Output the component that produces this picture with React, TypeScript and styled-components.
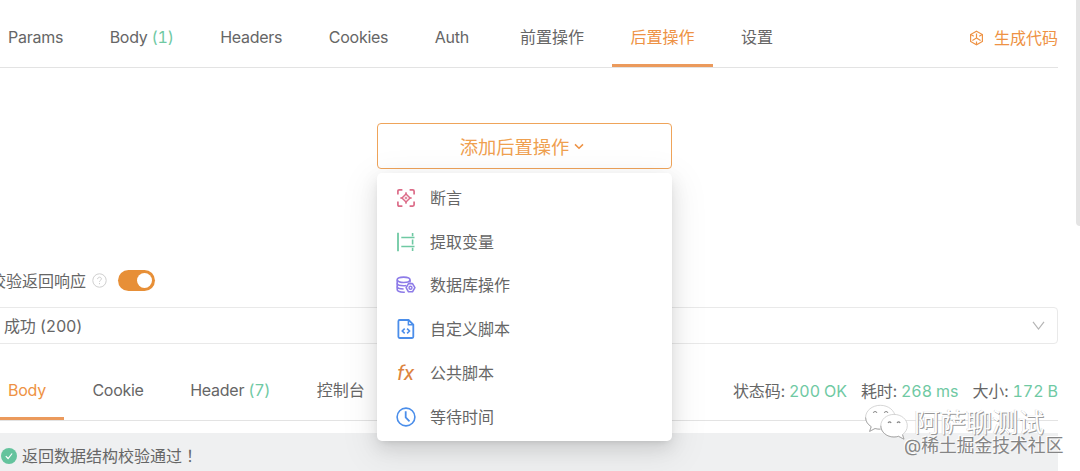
import React from "react";
import styled, { createGlobalStyle, css } from "styled-components";

const ORANGE = "#ee9244";
const GREEN = "#6fc9a3";

const requestTabs = [
  { label: "Params" },
  { label: "Body", count: 1 },
  { label: "Headers" },
  { label: "Cookies" },
  { label: "Auth" },
  { label: "前置操作", cjk: true, indent: 4.5 },
  { label: "后置操作", cjk: true, active: true },
  { label: "设置", cjk: true },
];

const responseTabs = [
  { label: "Body", active: true },
  { label: "Cookie" },
  { label: "Header", count: 7 },
  { label: "控制台", cjk: true },
];

const menuItems = [
  { label: "断言", icon: <AssertIcon /> },
  { label: "提取变量", icon: <ExtractIcon /> },
  { label: "数据库操作", icon: <DatabaseIcon /> },
  { label: "自定义脚本", icon: <ScriptIcon /> },
  { label: "公共脚本", icon: <FxIcon /> },
  { label: "等待时间", icon: <ClockIcon /> },
];

export default function App() {
  return (
    <>
      <GlobalStyle />
      <Page>
        <Content>
          <TabBar $height={68}>
            {requestTabs.map((tab) => (
              <Tab key={tab.label} $active={tab.active} $cjk={tab.cjk} $indent={tab.indent}>
                {tab.label}
                {tab.count && <Count>({tab.count})</Count>}
              </Tab>
            ))}
            <CodeLink>
              <CubeIcon />
              生成代码
            </CodeLink>
          </TabBar>

          <Processor>
            <Dropdown>
              <AddButton>
                添加后置操作
                <ButtonArrow />
              </AddButton>
              <Menu>
                {menuItems.map((item) => (
                  <MenuItem key={item.label}>
                    <IconSlot>{item.icon}</IconSlot>
                    {item.label}
                  </MenuItem>
                ))}
              </Menu>
            </Dropdown>
          </Processor>

          <ValidateRow>
            <ValidateLabel>校验返回响应</ValidateLabel>
            <HelpIcon />
            <Switch>
              <Knob />
            </Switch>
          </ValidateRow>

          <Select>
            成功 (200)
            <SelectArrow />
          </Select>

          <TabBar $height={77}>
            {responseTabs.map((tab) => (
              <Tab key={tab.label} $active={tab.active} $cjk={tab.cjk}>
                {tab.label}
                {tab.count && <Count>({tab.count})</Count>}
              </Tab>
            ))}
            <Stats>
              <span>
                状态码: <Value>200 OK</Value>
              </span>
              <span>
                耗时: <Value>268 ms</Value>
              </span>
              <span>
                大小: <Value>172 B</Value>
              </span>
            </Stats>
          </TabBar>

          <Banner>
            <CheckIcon />
            <span>
              返回数据结构校验通过<Mark>！</Mark>
            </span>
          </Banner>
        </Content>
        <Scrollbar />
        <Watermark>
          <WechatIcon />
          <AccountName>阿萨聊测试</AccountName>
        </Watermark>
        <Community>@稀土掘金技术社区</Community>
      </Page>
    </>
  );
}

function CubeIcon() {
  return (
    <svg width="15" height="16" viewBox="0 0 15 16" fill="none" stroke={ORANGE} strokeWidth="1.2">
      <path d="M7.5 1.2 13.4 4.5v7L7.5 14.8 1.6 11.5v-7z" />
      <path d="M7.5 3.6V8l-4.1 2.4M7.5 8l4.1 2.4" />
      <path d="M1.8 4.6l3 1.7M13.2 4.6l-3 1.7M7.5 14.6v-3" />
    </svg>
  );
}

function ButtonArrow() {
  return (
    <svg width="10" height="7" viewBox="0 0 10 7" fill="none" stroke={ORANGE} strokeWidth="1.5">
      <path d="M1 1.4l4 3.8 4-3.8" />
    </svg>
  );
}

function AssertIcon() {
  return (
    <svg width="18" height="18" viewBox="0 0 18 18" fill="none" stroke="#dc6c88" strokeWidth="1.7">
      <path d="M.9 5.4V2.2Q.9.9 2.2.9h3.2M12.6.9h3.2q1.3 0 1.3 1.3v3.2M17.1 12.6v3.2q0 1.3-1.3 1.3h-3.2M5.4 17.1H2.2q-1.3 0-1.3-1.3v-3.2" />
      <path d="M9 5 13 9 9 13 5 9z" strokeWidth="1.5" />
      <path d="M9 3.3v2M9 12.7v2M3.3 9h2M12.7 9h2" strokeWidth="1.5" />
      <circle cx="9" cy="9" r=".9" strokeWidth="1" />
    </svg>
  );
}

function ExtractIcon() {
  return (
    <svg width="18" height="20" viewBox="0 0 18 20" fill="none" stroke={GREEN} strokeWidth="1.8">
      <path d="M1 .8v18.4" />
      <path d="M4.3 5.5h13.2M4.3 14.500h13.200" strokeWidth="1.6" />
      <path d="M15.6 1v3.2M15.6 7.6v4.8M15.6 15.8V19" strokeWidth="1.6" />
    </svg>
  );
}

function DatabaseIcon() {
  return (
    <svg width="20" height="18" viewBox="0 0 20 18" fill="none" stroke="#8d7be8" strokeWidth="1.6">
      <ellipse cx="7.6" cy="3.8" rx="6.4" ry="2.7" />
      <path d="M1.2 3.8v9.8c0 1.6 2.9 2.6 6.4 2.6h1.2M14 3.8v2.6" />
      <path d="M1.2 7.2c0 1.5 2.9 2.5 6.4 2.5 1.2 0 2-.1 2.7-.3M1.2 10.5c0 1.5 2.9 2.5 6.4 2.5" />
      <path d="M12.5 7.6h4l2.4 4.1-2.4 4.1h-4l-2.4-4.1z" strokeLinejoin="round" />
      <circle cx="14.5" cy="11.7" r="1.5" strokeWidth="1.4" />
    </svg>
  );
}

function ScriptIcon() {
  return (
    <svg width="18" height="20" viewBox="0 0 18 20" fill="none" stroke="#4b8eea" strokeWidth="1.8">
      <path d="M2.6 1h9l4.7 4.6v12.2q0 1.2-1.2 1.2H2.6q-1.2 0-1.2-1.2V2.2Q1.4 1 2.6 1z" />
      <path d="M11.4 1.2v4.6h4.8" strokeWidth="1.5" />
      <path d="M7.7 9.7 5.3 12l2.4 2.3M10.1 9.7l2.4 2.3-2.4 2.3" strokeWidth="1.6" />
    </svg>
  );
}

function FxIcon() {
  return <FxMark>fx</FxMark>;
}

function ClockIcon() {
  return (
    <svg width="20" height="20" viewBox="0 0 20 20" fill="none" stroke="#4b8eea" strokeWidth="1.6">
      <circle cx="10" cy="10" r="8.9" />
      <path d="M9.7 4.3v6.2l3.8 3.8" strokeWidth="1.8" />
    </svg>
  );
}

function HelpIcon() {
  return (
    <svg width="15" height="15" viewBox="0 0 15 15" fill="none" stroke="#cfcfcf">
      <circle cx="7.5" cy="7.5" r="6.7" />
      <path d="M5.6 6.1c0-2.6 3.8-2.5 3.8-.2 0 1.4-1.9 1.4-1.9 2.9M7.5 10v1.2" />
    </svg>
  );
}

function SelectArrow() {
  return (
    <svg width="13" height="9" viewBox="0 0 13 9" fill="none" stroke="#b5b5b5" strokeWidth="1.2">
      <path d="M1 .8 6.5 8 12 .8" />
    </svg>
  );
}

function CheckIcon() {
  return (
    <svg width="16" height="16" viewBox="0 0 16 16" fill="none">
      <circle cx="8" cy="8" r="8" fill="#64c39d" />
      <path d="M4.8 8.1l2.3 2.4 4-5" stroke="#fff" strokeWidth="1.2" />
    </svg>
  );
}

function WechatIcon() {
  return (
    <svg width="45" height="37" viewBox="0 0 45 37" fill="#fff" stroke="#c4c4c4" strokeWidth=".7">
      <path d="M16.3 1.3C8.3 1.3 1.6 6.6 1.6 13.4c0 4 2.2 7.1 5.6 9.3l-1.6 4.7 5.4-2.9c2 .6 3.5.7 5.3.7 8.3 0 14.8-5.3 14.8-11.9S24.5 1.3 16.3 1.3z" />
      <path d="M30 10.4c-7.4 0-13.2 5-13.2 11.3S22.6 33 30 33c1.6 0 3.1-.3 4.5-.7l5.5 2.9-1.5-4.6c3-2.3 4.8-5.2 4.8-8.9 0-6.3-5.9-11.3-13.3-11.3z" />
      <path
        d="M1.6 13.4c0 4 2.2 7.1 5.6 9.3l-1.6 4.7 5.4-2.9c2 .6 3.5.7 5.3.7M16.8 21.7C16.8 28 22.6 33 30 33c1.6 0 3.1-.3 4.5-.7l5.5 2.9-1.5-4.6"
        fill="none"
        stroke="#979797"
      />
      <path d="M9.2 8.8q1.9-2.6 3.8 0M20.2 8.8q1.9-2.6 3.8 0M24 19q1.6-2.3 3.2 0M33 19q1.6-2.3 3.2 0" fill="none" stroke="#858585" strokeWidth="1.1" />
    </svg>
  );
}

const GlobalStyle = createGlobalStyle`
  * {
    box-sizing: border-box;
  }
  body {
    margin: 0;
    background: #fff;
  }
`;

const Page = styled.div`
  position: relative;
  width: 1080px;
  height: 471px;
  overflow: hidden;
  display: flex;
  justify-content: space-between;
  background: #fff;
  color: #666;
  font-family: Inter, "Noto Sans CJK SC", sans-serif;
  font-size: 16px;
  font-variant-numeric: tabular-nums;
  line-height: 24px;
`;

const Content = styled.div`
  width: 1058px;
  height: 471px;
  display: flex;
  flex-direction: column;
`;

const TabBar = styled.div<{ $height: number }>`
  flex: none;
  height: ${(props) => props.$height}px;
  display: flex;
  align-items: flex-end;
  gap: 9.5px;
  margin-left: -10.5px;
  border-bottom: 1px solid #e3e3e3;
`;

const Tab = styled.div<{ $active?: boolean; $cjk?: boolean; $indent?: number }>`
  height: 42px;
  margin-left: ${(props) => props.$indent ?? 0}px;
  padding: 0 18.5px;
  white-space: nowrap;
  letter-spacing: ${(props) => (props.$cjk ? "0" : "-0.26px")};
  ${(props) =>
    props.$active &&
    css`
      color: ${ORANGE};
      border-bottom: 3px solid #eb9a5c;
    `}
`;

const Count = styled.span`
  margin-left: 4px;
  color: ${GREEN};
`;

const CodeLink = styled.div`
  height: 41px;
  margin-left: auto;
  display: flex;
  gap: 10px;
  color: ${ORANGE};
  svg {
    margin-top: 4px;
  }
`;

const Processor = styled.div`
  flex: none;
  height: 189px;
  padding: 55px 0 0 377px;
`;

const Dropdown = styled.div`
  position: relative;
  width: 295px;
`;

const AddButton = styled.button`
  width: 295px;
  height: 46px;
  padding: 1px 5px 0 0;
  display: flex;
  align-items: center;
  justify-content: center;
  gap: 5px;
  background: #fff;
  border: 1px solid #efa45a;
  border-radius: 4px;
  color: #efa04f;
  font: inherit;
  font-size: 18.3px;
`;

const Menu = styled.div`
  position: absolute;
  z-index: 2;
  top: 50px;
  left: 0;
  width: 295px;
  height: 268px;
  padding: 3px 0 2.5px;
  background: #fff;
  border-radius: 5px;
  box-shadow: 0 3px 7px -4px rgba(0, 0, 0, 0.16), 0 7px 18px rgba(0, 0, 0, 0.1),
    0 10px 34px 8px rgba(0, 0, 0, 0.06);
`;

const MenuItem = styled.div`
  height: 43.75px;
  padding-left: 18px;
  display: flex;
  align-items: center;
  gap: 14px;
`;

const IconSlot = styled.span`
  width: 21px;
  height: 24px;
  display: flex;
  align-items: center;
  justify-content: center;
`;

const FxMark = styled.i`
  color: #dd8440;
  font-family: Roboto, sans-serif;
  font-size: 21px;
  font-style: italic;
`;

const ValidateRow = styled.div`
  flex: none;
  height: 50px;
  padding-bottom: 4px;
  display: flex;
  align-items: center;
`;

const ValidateLabel = styled.span`
  margin: 2px 6px 0 -10px;
  white-space: nowrap;
`;

const Switch = styled.div`
  width: 37px;
  height: 21px;
  margin-left: 11px;
  padding: 3px;
  display: flex;
  justify-content: flex-end;
  background: #e78f37;
  border-radius: 11px;
`;

const Knob = styled.div`
  width: 15px;
  height: 15px;
  border-radius: 50%;
  background: #fff;
`;

const Select = styled.div`
  flex: none;
  height: 37px;
  margin-left: -8px;
  padding: 0 12px 0 11px;
  display: flex;
  align-items: center;
  justify-content: space-between;
  border: 1px solid #e9e9e9;
  border-radius: 4px;
  letter-spacing: -0.2px;
`;

const Stats = styled.div`
  height: 41px;
  margin-left: auto;
  display: flex;
  gap: 14px;
  letter-spacing: -0.1px;
  white-space: nowrap;
`;

const Value = styled.span`
  color: ${GREEN};
`;

const Banner = styled.div`
  flex: 1;
  margin-top: 12px;
  padding: 10px 0 0 1px;
  display: flex;
  gap: 5px;
  background: #eff0f1;
  svg {
    margin-top: 5px;
  }
`;

const Mark = styled.span`
  font-family: "Noto Sans CJK TC", sans-serif;
`;

const Scrollbar = styled.div`
  width: 4px;
  height: 226px;
  background: #e4e4e4;
  border-radius: 0 0 0 4px;
`;

const Watermark = styled.div`
  position: absolute;
  z-index: 3;
  top: 404px;
  left: 864px;
  display: flex;
  gap: 5px;
`;

const AccountName = styled.span`
  margin-top: 5px;
  color: #fff;
  font-size: 26px;
  line-height: 28px;
  text-shadow: 1px 1px 0 #9a9a9a, -0.5px -0.5px 0 #d2d2d2;
`;

const Community = styled.span`
  position: absolute;
  z-index: 3;
  top: 437px;
  left: 904px;
  color: #858585;
  font-size: 17.8px;
  line-height: 18px;
  white-space: nowrap;
  text-shadow: -1px -1px 0 #fff;
`;
